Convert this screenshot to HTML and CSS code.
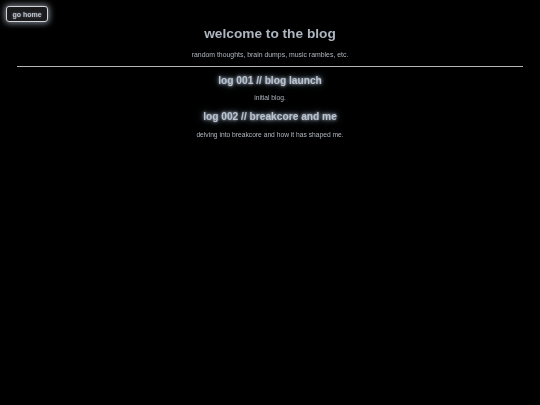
FILE: index.html
```html
<!DOCTYPE html>
<html lang="en">
<head>
<meta charset="utf-8">
<title>blog</title>
<link rel="stylesheet" href="styles.css">
</head>
<body>
<header class="topbar">
  <a class="home-btn" href="#">go home</a>
</header>
<main class="page">
  <h1 class="title">welcome to the blog</h1>
  <p class="subtitle">random thoughts, brain dumps, music rambles, etc.</p>
  <hr class="rule">
  <article class="post">
    <h2 class="post-title">log 001 // blog launch</h2>
    <p class="post-desc">initial blog.</p>
  </article>
  <article class="post">
    <h2 class="post-title">log 002 // breakcore and me</h2>
    <p class="post-desc">delving into breakcore and how it has shaped me.</p>
  </article>
</main>
</body>
</html>
```
FILE: styles.css
```css
html, body {
  margin: 0;
  padding: 0;
  background: #000;
}
body {
  font-family: "Liberation Sans", Arial, sans-serif;
  color: #a9b3be;
  width: 540px;
  height: 405px;
}
.topbar {
  display: flex;
  padding: 6px 6px 0;
  will-change: transform;
}
.home-btn {
  display: flex;
  align-items: center;
  justify-content: center;
  box-sizing: border-box;
  width: 42px;
  height: 16px;
  border: 1.5px solid #d0d5dc;
  border-radius: 3px;
  background: #1c1c1f;
  box-shadow: 0 0 6px 1px rgba(200, 210, 225, 0.7);
  color: #b9bfc8;
  font-size: 7px;
  font-weight: bold;
  text-decoration: none;
  text-shadow: 0 0 2px rgba(200, 210, 225, 0.5);
}
.page {
  padding: 0 17px;
  text-align: center;
  will-change: transform;
}
.title {
  margin: 4px 0 0;
  font-size: 13.7px;
  line-height: 16px;
  font-weight: bold;
  color: #adb6c1;
}
.subtitle {
  margin: 9px 0 0;
  font-size: 6.9px;
  line-height: 8px;
  color: #b0b8c2;
}
.rule {
  margin: 6.5px 0 0;
  border: 0;
  border-top: 1px solid #b5b5b5;
  height: 0;
}
.post-title {
  margin: 7.5px 0 0;
  font-size: 10.2px;
  line-height: 13px;
  font-weight: bold;
  color: #b9c3cf;
  text-shadow: 0 0 3px rgba(200, 215, 235, 0.9), 0 0 7px rgba(180, 200, 225, 0.7);
}
.post-desc {
  margin: 7px 0 0;
  font-size: 6.7px;
  line-height: 8px;
  color: #b0b8c2;
}
.post + .post .post-desc {
  margin-top: 8px;
}
```
